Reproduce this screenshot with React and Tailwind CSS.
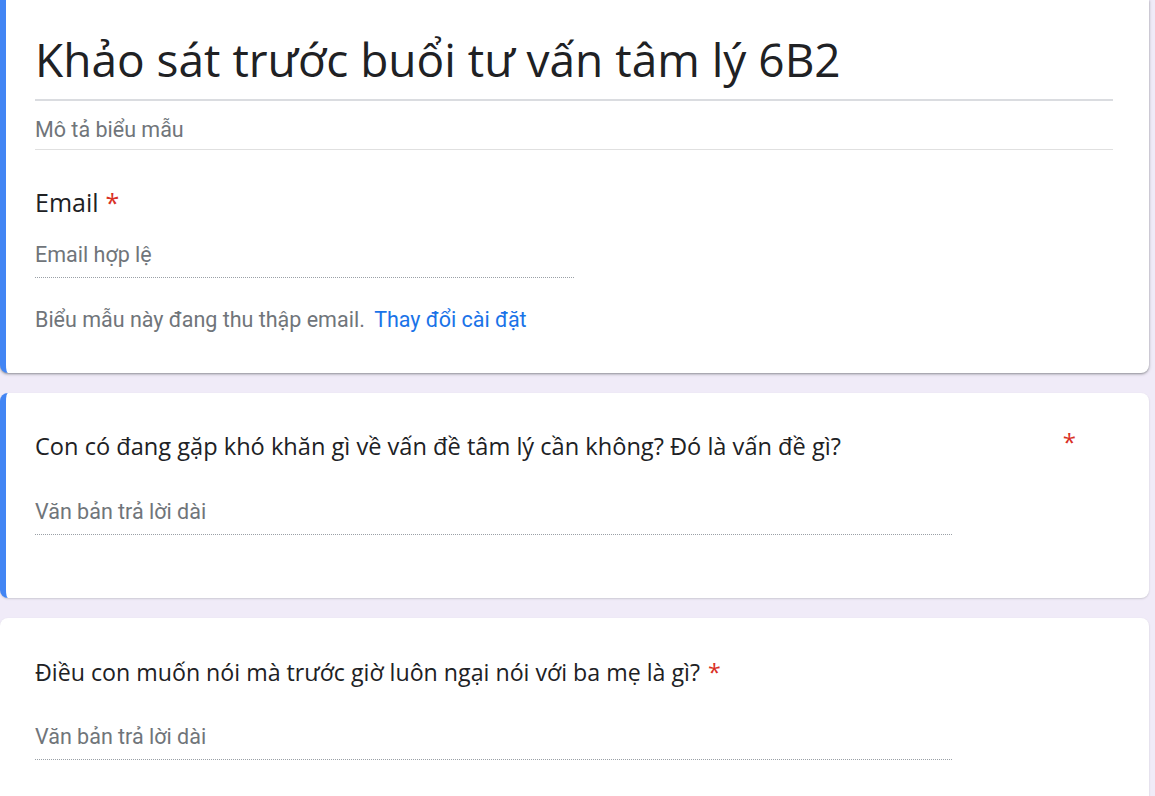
import React from "react"

const heading = "font-['Open_Sans','Noto_Sans',sans-serif]"
const body = "font-['Roboto','Noto_Sans',sans-serif]"

const Required = ({ className = "" }) => (
  <span className={`text-[#d93025] ${className}`}>*</span>
)

const LongAnswer = ({ className = "" }) => (
  <div
    className={`${body} w-[917px] border-b border-dotted border-[#9aa0a6] pb-[8px] text-[21.5px] leading-[28px] text-[#70757a] ${className}`}
  >
    Văn bản trả lời dài
  </div>
)

const App = () => {
  return (
    <div className="min-h-screen overflow-hidden bg-[#f0ebf8] pb-10">
      <div className="mr-[6px] flex flex-col gap-[20px]">
        {/* header card, top is scrolled off */}
        <div className="rounded-b-lg border-l-[6px] border-[#4285f4] bg-white pt-[30px] pr-[36px] pb-[39px] pl-[29px] shadow-[0_1px_2px_rgba(60,64,67,0.4),0_1px_3px_1px_rgba(60,64,67,0.15)]">
          <div
            className={`${heading} border-b-2 border-[#dadce0] pb-[11px] text-[46px] leading-[58px] text-[#202124]`}
          >
            Khảo sát trước buổi tư vấn tâm lý 6B2
          </div>
          <div
            className={`${body} mt-[15px] border-b border-[#e0e0e0] pb-[5px] text-[21.5px] leading-[28px] text-[#70757a]`}
          >
            Mô tả biểu mẫu
          </div>
          <div
            className={`${heading} mt-[36px] text-[25px] leading-[32px] text-[#202124]`}
          >
            Email<Required className="ml-[7px]" />
          </div>
          <div
            className={`${body} mt-[23px] w-[539px] border-b border-dotted border-[#9aa0a6] pb-[8px] text-[21.5px] leading-[28px] text-[#70757a]`}
          >
            Email hợp lệ
          </div>
          <div
            className={`${body} mt-[28px] text-[21.5px] leading-[28px] text-[#70757a]`}
          >
            Biểu mẫu này đang thu thập email.{" "}
            <a href="#" className="ml-1 text-[#1a73e8]">
              Thay đổi cài đặt
            </a>
          </div>
        </div>

        {/* question 1 */}
        <div className="rounded-lg border-l-[6px] border-[#4285f4] bg-white pt-[37px] pb-[63px] pl-[29px] shadow-[0_1px_2px_rgba(60,64,67,0.2)]">
          <div className="flex w-[1041px] items-start">
            <div
              className={`${heading} flex-1 text-[23.6px] leading-[32px] text-[#202124]`}
            >
              Con có đang gặp khó khăn gì về vấn đề tâm lý cần không? Đó là vấn
              đề gì?
            </div>
            <Required className={`${heading} text-[24px] leading-[24px]`} />
          </div>
          <LongAnswer className="mt-[36px]" />
        </div>

        {/* question 2 */}
        <div className="rounded-lg bg-white pt-[38px] pb-[61px] pl-[35px] shadow-[0_1px_2px_rgba(60,64,67,0.2)]">
          <div
            className={`${heading} text-[23.2px] leading-[32px] text-[#202124]`}
          >
            Điều con muốn nói mà trước giờ luôn ngại nói với ba mẹ là gì?
            <Required className="ml-[8px]" />
          </div>
          <LongAnswer className="mt-[35px]" />
        </div>
      </div>
    </div>
  )
}

export default App
